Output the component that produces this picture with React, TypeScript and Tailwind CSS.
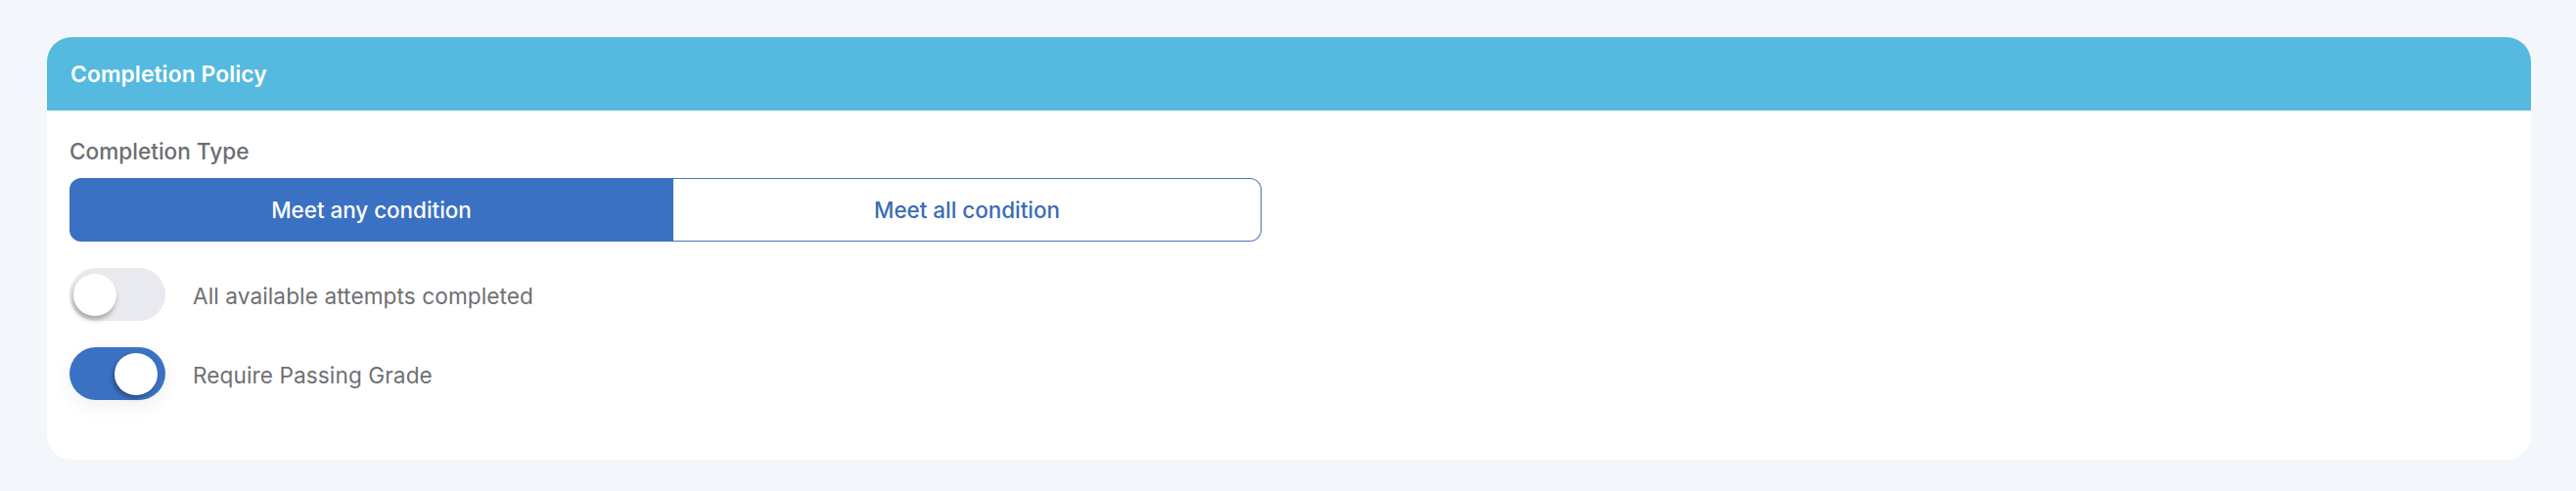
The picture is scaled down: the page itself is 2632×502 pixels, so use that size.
import React from "react";

function Toggle({ on, label }: { on: boolean; label: string }) {
  return (
    <div className="flex items-center">
      <div
        className={
          on
            ? "relative w-[98px] h-[54px] rounded-full bg-[#3b71c2] shadow-[0_6px_18px_rgba(40,60,90,0.08)]"
            : "relative w-[98px] h-[54px] rounded-full bg-[#e9eaef]"
        }
      >
        <div
          className={
            on
              ? "absolute left-[46px] top-[6px] w-[44px] h-[43px] rounded-full bg-white shadow-[-2px_3px_4px_rgba(0,0,0,0.3)]"
              : "absolute left-[4px] top-[6px] w-[44px] h-[43px] rounded-full bg-white shadow-[-1px_4px_5px_rgba(0,0,0,0.28)]"
          }
        />
      </div>
      <span className="ml-[28px] mt-[3px] text-[22.6px] leading-[30px] tracking-[0.1px] text-[#6e7074]">{label}</span>
    </div>
  );
}

export default function App() {
  return (
    <div
      className="w-[2632px] h-[502px] bg-[#f3f6fa] pt-[38px] pl-[48px] pr-[46px]"
      style={{ fontFamily: "Inter, 'Open Sans', sans-serif" }}
    >
      <div className="bg-white rounded-[25px] overflow-hidden">
        <div className="h-[75px] bg-[#55b9e0] flex items-center px-[24px]">
          <span className="mt-[1px] text-white font-semibold text-[22.8px] tracking-[0.1px]">Completion Policy</span>
        </div>
        <div className="pl-[23px] pt-[27px] pb-[61px]">
          <div className="text-[22.6px] leading-[30px] font-medium text-[#6b6e72]">Completion Type</div>
          <div className="mt-[12px] flex w-[1218px] h-[65px]">
            <div className="w-[617px] h-full bg-[#3b71c2] rounded-l-[12px] flex items-center justify-center text-white text-[22.4px] font-medium">
              Meet any condition
            </div>
            <div className="flex-1 h-full bg-white border-[1.5px] border-l-0 border-[#4b76b1] rounded-r-[12px] flex items-center justify-center text-[#3a6cb5] text-[22.4px] font-medium">
              Meet all condition
            </div>
          </div>
          <div className="mt-[27px] flex flex-col gap-[27px]">
            <Toggle on={false} label="All available attempts completed" />
            <Toggle on={true} label="Require Passing Grade" />
          </div>
        </div>
      </div>
    </div>
  );
}
